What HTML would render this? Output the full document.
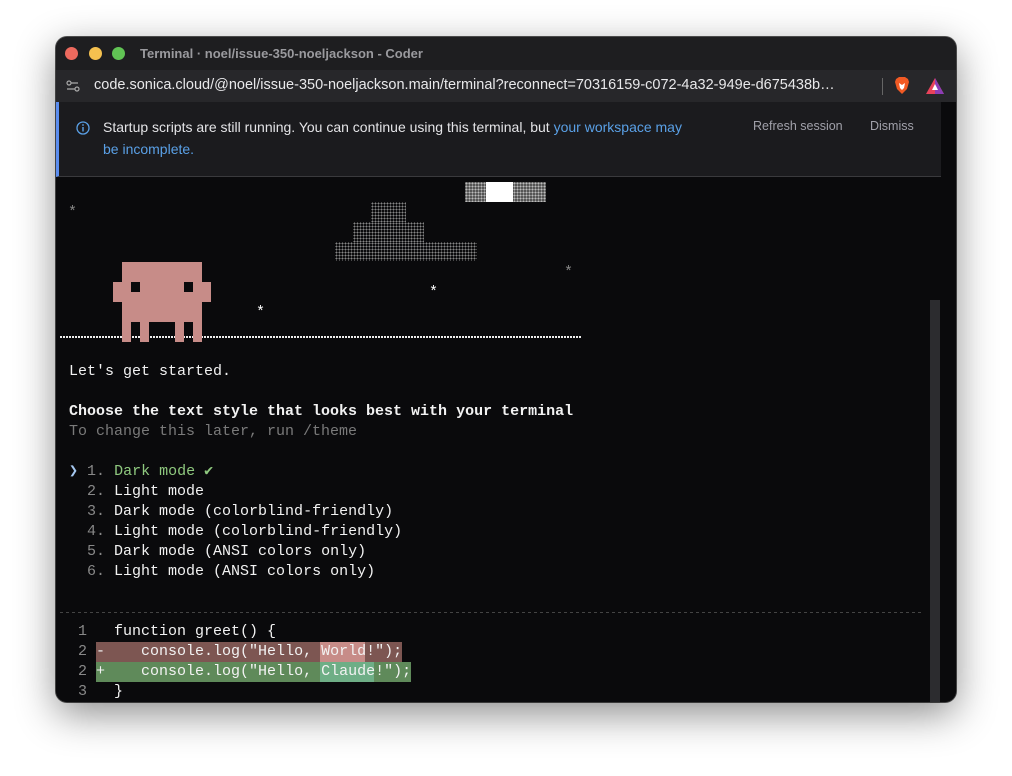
<!DOCTYPE html>
<html><head><meta charset="utf-8"><style>
*{margin:0;padding:0;box-sizing:border-box}
body{width:1012px;height:776px;background:#fff;position:relative;overflow:hidden;font-family:"Liberation Sans",sans-serif}
.win{position:absolute;left:56px;top:37px;width:900px;height:665px;border-radius:11px;background:#0a0a0c;overflow:hidden;box-shadow:0 12px 40px rgba(0,0,0,.45),0 0 0 1px #555}
.title{position:absolute;left:0;top:0;width:900px;height:33px;background:#1e1e20}
.dot{position:absolute;top:10px;width:13px;height:13px;border-radius:50%}
.addr{position:absolute;left:0;top:33px;width:900px;height:32px;background:#27272a}
.banner{position:absolute;left:0;top:65px;width:885px;height:75px;background:#1b1b1e;border-left:3px solid #5b8def;border-bottom:1px solid #3a3a3d}
.term{position:absolute;left:0;top:140px;width:900px;height:525px;background:#0a0a0c;font-family:"Liberation Mono",monospace;font-size:15px;color:#f2f2f2}
.l{position:absolute;left:13px;white-space:pre;line-height:20px}
.p{position:absolute}
.dith{background-image:radial-gradient(#bbb 0.8px,transparent 0.9px);background-size:3px 3px}
</style></head><body>
<div class="win">
 <div class="title">
  <div class="dot" style="left:9px;background:#ed6a5e"></div>
  <div class="dot" style="left:33px;background:#f5c14f"></div>
  <div class="dot" style="left:56px;background:#61c454"></div>
  <div style="position:absolute;left:84px;top:9px;font-size:13px;font-weight:bold;color:#9a9a9e">Terminal · noel/issue-350-noeljackson - Coder</div>
 </div>
 <div class="addr">
  <svg style="position:absolute;left:10px;top:10px" width="14" height="12" viewBox="0 0 14 12"><circle cx="3" cy="3" r="2" fill="none" stroke="#aaa" stroke-width="1.2"/><line x1="5" y1="3" x2="12" y2="3" stroke="#aaa" stroke-width="1.2"/><circle cx="11" cy="9" r="2" fill="none" stroke="#aaa" stroke-width="1.2"/><line x1="1" y1="9" x2="9" y2="9" stroke="#aaa" stroke-width="1.2"/></svg>
  <div style="position:absolute;left:38px;top:7px;font-size:14.5px;color:#e8e8ea;white-space:nowrap">code.sonica.cloud/@noel/issue-350-noeljackson.main/terminal?reconnect=70316159-c072-4a32-949e-d675438b…</div>
  <div style="position:absolute;left:826px;top:8px;width:1px;height:17px;background:#666"></div>
  <svg style="position:absolute;left:838px;top:6px" width="16" height="19" viewBox="0 0 16 19"><path d="M2 3 L5 1 H11 L14 3 L15 6 L13 13 L8 18 L3 13 L1 6Z" fill="#f15a24"/><path d="M5 7 L8 9 L11 7 L10 12 L8 14 L6 12Z" fill="#fff"/></svg>
  <svg style="position:absolute;left:870px;top:8px" width="18" height="16" viewBox="0 0 18 16"><path d="M9 0 L18 16 H0Z" fill="#e8425b"/><path d="M9 0 L18 16 H9Z" fill="#8c3db5"/><path d="M9 6 L12 12 H6Z" fill="#fff"/></svg>
 </div>
 <div class="banner">
  <svg style="position:absolute;left:17px;top:19px" width="14" height="14" viewBox="0 0 14 14"><circle cx="7" cy="7" r="6" fill="none" stroke="#5aa0e6" stroke-width="1.3"/><line x1="7" y1="6" x2="7" y2="10.5" stroke="#5aa0e6" stroke-width="1.4"/><circle cx="7" cy="4" r=".9" fill="#5aa0e6"/></svg>
  <div style="position:absolute;left:44px;top:14px;width:640px;font-size:14px;line-height:22px;color:#e4e4e7">Startup scripts are still running. You can continue using this terminal, but <span style="color:#5aa0e6">your workspace may<br>be incomplete.</span></div>
  <div style="position:absolute;left:694px;top:17px;font-size:12.5px;color:#a1a1aa">Refresh session</div>
  <div style="position:absolute;left:811px;top:17px;font-size:12.5px;color:#a1a1aa">Dismiss</div>
 </div>
 <div class="term">
  <div class="p dith" style="left:409px;top:5px;width:81px;height:20px;background-color:#555"></div>
  <div class="p" style="left:430px;top:5px;width:27px;height:20px;background:#fff"></div>
  <div class="p dith" style="left:315px;top:25px;width:35px;height:20px;opacity:.7"></div>
  <div class="p dith" style="left:297px;top:45px;width:71px;height:20px;opacity:.7"></div>
  <div class="p dith" style="left:279px;top:65px;width:142px;height:19px;opacity:.7"></div>
  <div class="l" style="left:12px;top:26px;color:#888">*</div>
  <div class="l" style="left:508px;top:86px;color:#888">*</div>
  <div class="l" style="left:373px;top:106px;color:#fff">*</div>
  <div class="l" style="left:200px;top:126px;color:#fff">*</div>
  <div class="p" style="left:4px;top:159px;width:522px;height:2px;background-image:repeating-linear-gradient(90deg,#eee 0 2px,transparent 2px 3px)"></div>
  <div class="p" style="left:66px;top:85px;width:80px;height:60px;background:#c78c88"></div>
  <div class="p" style="left:57px;top:105px;width:98px;height:20px;background:#c78c88"></div>
  <div class="p" style="left:75px;top:105px;width:9px;height:10px;background:#0a0a0c"></div>
  <div class="p" style="left:128px;top:105px;width:9px;height:10px;background:#0a0a0c"></div>
  <div class="p" style="left:66px;top:145px;width:9px;height:20px;background:#c78c88"></div>
  <div class="p" style="left:84px;top:145px;width:9px;height:20px;background:#c78c88"></div>
  <div class="p" style="left:119px;top:145px;width:9px;height:20px;background:#c78c88"></div>
  <div class="p" style="left:137px;top:145px;width:9px;height:20px;background:#c78c88"></div>

  <div class="l" style="top:185px">Let's get started.</div>
  <div class="l" style="top:225px;font-weight:bold">Choose the text style that looks best with your terminal</div>
  <div class="l" style="top:245px;color:#7a7a7a">To change this later, run /theme</div>
  <div class="l" style="top:285px"><span style="color:#a5c8f0">❯</span> <span style="color:#888">1.</span> <span style="color:#8fc97f">Dark mode ✔</span></div>
  <div class="l" style="top:305px">  <span style="color:#888">2.</span> Light mode</div>
  <div class="l" style="top:325px">  <span style="color:#888">3.</span> Dark mode (colorblind-friendly)</div>
  <div class="l" style="top:345px">  <span style="color:#888">4.</span> Light mode (colorblind-friendly)</div>
  <div class="l" style="top:365px">  <span style="color:#888">5.</span> Dark mode (ANSI colors only)</div>
  <div class="l" style="top:385px">  <span style="color:#888">6.</span> Light mode (ANSI colors only)</div>
  <div class="p" style="left:4px;top:435px;width:864px;height:1px;background-image:repeating-linear-gradient(90deg,#444 0 3px,transparent 3px 6px)"></div>
  <div class="l" style="top:445px"> <span style="color:#888">1</span>   function greet() {</div>
  <div class="p" style="left:40px;top:465px;width:306px;height:20px;background:#7d5652"></div>
  <div class="p" style="left:264px;top:465px;width:45px;height:20px;background:#c78c88"></div>
  <div class="l" style="top:465px"> <span style="color:#888">2</span> -    console.log("Hello, World!");</div>
  <div class="p" style="left:40px;top:485px;width:315px;height:20px;background:#5f8a5a"></div>
  <div class="p" style="left:264px;top:485px;width:54px;height:20px;background:#6eae86"></div>
  <div class="l" style="top:485px"> <span style="color:#888">2</span> +    console.log("Hello, Claude!");</div>
  <div class="l" style="top:505px"> <span style="color:#888">3</span>   }</div>
  <div class="p" style="left:874px;top:123px;width:10px;height:402px;background:#2c2c2f"></div>
 </div>
</div>
</body></html>
